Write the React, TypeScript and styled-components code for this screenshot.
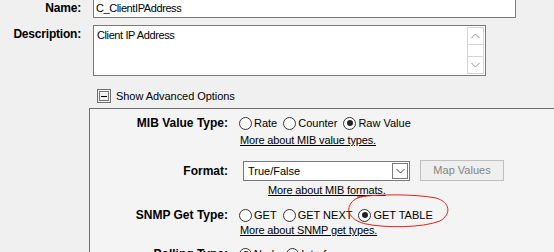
import styled, {createGlobalStyle} from 'styled-components';

const GlobalStyle = createGlobalStyle`
  html, body {
    margin: 0;
    background: #f0f0f0;
    overflow: hidden;
  }
  body {
    font-family: "Liberation Sans", Arial, sans-serif;
    font-size: 11px;
    color: #000;
  }
`;

const Page = styled.div`
  position: relative;
  margin-top: -3px;
  width: 554px;
  height: 255px;
`;

const FormRow = styled.div<{$top?: number}>`
  display: grid;
  grid-template-columns: 81px 1fr;
  column-gap: 12px;
  align-items: start;
  margin-top: ${(p) => p.$top ?? 0}px;
`;

const FieldLabel = styled.div<{$pad?: number}>`
  font-size: 12px;
  font-weight: bold;
  text-align: right;
  line-height: 14px;
  padding-top: ${(p) => p.$pad ?? 0}px;
  letter-spacing: -0.2px;
`;

const TextInput = styled.div`
  width: 423px;
  height: 21px;
  box-sizing: border-box;
  border: 1px solid #7a7a7a;
  background: #fff;
  padding: 3px 2px 0;
  line-height: 14px;
  letter-spacing: -0.4px;
`;

const TextArea = styled.div`
  width: 393px;
  height: 51px;
  box-sizing: border-box;
  border: 1px solid #7a7a7a;
  background: #fff;
  display: flex;
  padding: 1px;
`;

const AreaText = styled.div`
  flex: 1;
  padding: 1px 2px;
  line-height: 14px;
  letter-spacing: -0.4px;
`;

const ScrollBar = styled.div`
  width: 17px;
  display: flex;
  flex-direction: column;
  justify-content: space-between;
  border: 1px solid #d6d6d6;
  box-sizing: border-box;
`;

const ScrollButton = styled.div<{$edge: 'top' | 'bottom'}>`
  height: 16px;
  display: flex;
  align-items: center;
  justify-content: center;
  border-${(p) => (p.$edge === 'top' ? 'bottom' : 'top')}: 1px solid #d6d6d6;
`;

const Toggle = styled.div`
  display: flex;
  align-items: center;
  gap: 5px;
  margin: 13px 0 0 97px;
  height: 14px;
  letter-spacing: -0.05px;
`;

const Panel = styled.div`
  margin: 5px 0 0 89px;
  border-top: 1px solid #6e6e6e;
  border-left: 1px solid #6e6e6e;
  background: #f4f4f4;
  height: 160px;
`;

const PanelRow = styled.div<{$top: number}>`
  display: grid;
  grid-template-columns: 138px 1fr;
  column-gap: 11px;
  align-items: center;
  margin-top: ${(p) => p.$top}px;
`;

const PanelLabel = styled.div`
  font-size: 12px;
  font-weight: bold;
  text-align: right;
  line-height: 16px;
`;

const RadioGroup = styled.div`
  display: flex;
  align-items: center;
  gap: 6px;
  height: 16px;
`;

const RadioOption = styled.label`
  display: flex;
  align-items: center;
  gap: 2px;
  line-height: 14px;
`;

const RadioCircle = styled.span<{$checked?: boolean}>`
  width: 13px;
  height: 13px;
  box-sizing: border-box;
  border: 1px solid #333;
  border-radius: 50%;
  background: #fff;
  display: flex;
  align-items: center;
  justify-content: center;
  &::after {
    content: '';
    width: 6px;
    height: 6px;
    border-radius: 50%;
    background: ${(p) => (p.$checked ? '#222' : 'transparent')};
  }
`;

const MoreLink = styled.div<{$top: number; $left: number}>`
  margin: ${(p) => p.$top}px 0 0 ${(p) => p.$left}px;
  line-height: 14px;
  text-decoration: underline;
  letter-spacing: -0.15px;
`;

const FormatControls = styled.div`
  display: flex;
  align-items: center;
  gap: 10px;
  margin-left: 4px;
`;

const SelectBox = styled.div`
  width: 167px;
  height: 20px;
  box-sizing: border-box;
  border: 1px solid #7a7a7a;
  background: #fff;
  display: flex;
  align-items: center;
  justify-content: space-between;
  padding: 0 1px 0 4px;
`;

const DropButton = styled.div`
  width: 16px;
  height: 16px;
  box-sizing: border-box;
  border: 1px solid #7a7a7a;
  display: flex;
  align-items: center;
  justify-content: center;
`;

const MapButton = styled.div`
  width: 84px;
  height: 21px;
  box-sizing: border-box;
  border: 1px solid #bfbfbf;
  background: #efefef;
  color: #838383;
  display: flex;
  align-items: center;
  justify-content: center;
  margin-top: -2px;
`;

const Annotation = styled.svg`
  position: absolute;
  top: 3px;
  left: 0;
  pointer-events: none;
`;

const Radio = ({label, checked}: {label: string; checked?: boolean}) => (
  <RadioOption>
    <RadioCircle $checked={checked} />
    {label}
  </RadioOption>
);

const Chevron = ({up, color = '#909090'}: {up?: boolean; color?: string}) => (
  <svg width="9" height="6" viewBox="0 0 9 6">
    <path
      d={up ? 'M0.5 5 L4.5 1 L8.5 5' : 'M0.5 1 L4.5 5 L8.5 1'}
      fill="none"
      stroke={color}
      strokeWidth="1"
    />
  </svg>
);

const CollapseIcon = () => (
  <svg width="14" height="14" viewBox="0 0 14 14">
    <rect x="0.5" y="0.5" width="13" height="13" fill="#f0f0f0" stroke="#707070" />
    <rect x="2.5" y="2.5" width="9" height="9" fill="none" stroke="#000" strokeDasharray="1 1" />
    <line x1="4" y1="7.5" x2="10" y2="7.5" stroke="#000" />
  </svg>
);

export default function App() {
  return (
    <>
      <GlobalStyle />
      <Page>
        <FormRow>
          <FieldLabel $pad={4}>Name:</FieldLabel>
          <TextInput>C_ClientIPAddress</TextInput>
        </FormRow>

        <FormRow $top={7}>
          <FieldLabel $pad={2}>Description:</FieldLabel>
          <TextArea>
            <AreaText>Client IP Address</AreaText>
            <ScrollBar>
              <ScrollButton $edge="top">
                <Chevron up />
              </ScrollButton>
              <ScrollButton $edge="bottom">
                <Chevron />
              </ScrollButton>
            </ScrollBar>
          </TextArea>
        </FormRow>

        <Toggle>
          <CollapseIcon />
          Show Advanced Options
        </Toggle>

        <Panel>
          <PanelRow $top={6}>
            <PanelLabel>MIB Value Type:</PanelLabel>
            <RadioGroup>
              <Radio label="Rate" />
              <Radio label="Counter" />
              <Radio label="Raw Value" checked />
            </RadioGroup>
          </PanelRow>
          <MoreLink $top={2} $left={150}>
            More about MIB value types.
          </MoreLink>

          <PanelRow $top={14}>
            <PanelLabel>Format:</PanelLabel>
            <FormatControls>
              <SelectBox>
                True/False
                <DropButton>
                  <Chevron color="#404040" />
                </DropButton>
              </SelectBox>
              <MapButton>Map Values</MapButton>
            </FormatControls>
          </PanelRow>
          <MoreLink $top={2} $left={178}>
            More about MIB formats.
          </MoreLink>

          <PanelRow $top={10}>
            <PanelLabel>SNMP Get Type:</PanelLabel>
            <RadioGroup>
              <Radio label="GET" />
              <Radio label="GET NEXT" />
              <Radio label="GET TABLE" checked />
            </RadioGroup>
          </PanelRow>
          <MoreLink $top={0} $left={150}>
            More about SNMP get types.
          </MoreLink>

          <PanelRow $top={9}>
            <PanelLabel>Polling Type:</PanelLabel>
            <RadioGroup>
              <Radio label="Node" checked />
              <Radio label="Interface" />
            </RadioGroup>
          </PanelRow>
        </Panel>

        <Annotation width="554" height="252" viewBox="0 0 554 252">
          <path
            d="M357 197 C380 194, 415 194, 436 198 C450 202, 452 214, 440 221 C422 228, 385 228, 366 224 C352 221, 346 212, 350 205 C352 200, 358 197, 366 196"
            fill="none"
            stroke="#e2231a"
            strokeWidth="1"
          />
        </Annotation>
      </Page>
    </>
  );
}
